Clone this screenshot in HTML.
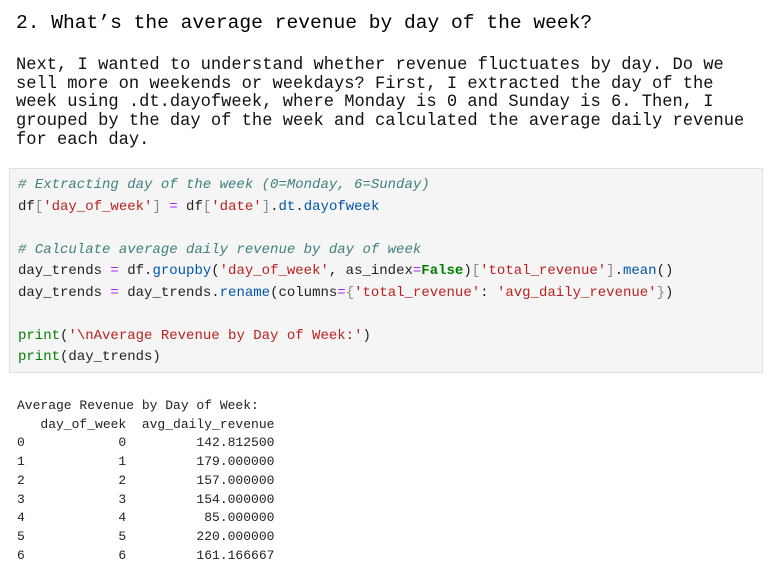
<!DOCTYPE html>
<html><head><style>
body{margin:0;background:#fff;width:772px;height:569px;overflow:hidden;font-family:"Liberation Mono",monospace;color:#000}
.h{position:absolute;left:16px;top:10px;font-size:19.6px;line-height:26px;white-space:pre}
.p{position:absolute;left:16px;top:57px;font-size:17.1px;line-height:18.7px;white-space:pre;color:#111}
.code{position:absolute;left:9px;top:168px;width:752px;height:203px;background:#f5f5f5;border:1px solid #e0e0e0}
.code pre{margin:0;position:absolute;left:8px;top:6px;font-family:"Liberation Mono",monospace;font-size:14px;line-height:21.5px;color:#222}
.c{color:#408080;font-style:italic}.s{color:#ba2121}.o{color:#aa22ff}.m{color:#0055aa}.g{color:#008000}.b{color:#888}.k{color:#008000;font-weight:bold}
.out{position:absolute;left:17px;top:397px;margin:0;font-family:"Liberation Mono",monospace;font-size:13px;line-height:18.7px;color:#222}
</style></head><body>
<div class="h">2. What’s the average revenue by day of the week?</div>
<div class="p">Next, I wanted to understand whether revenue fluctuates by day. Do we
sell more on weekends or weekdays? First, I extracted the day of the
week using .dt.dayofweek, where Monday is 0 and Sunday is 6. Then, I
grouped by the day of the week and calculated the average daily revenue
for each day.</div>
<div class="code"><pre><span class="c"># Extracting day of the week (0=Monday, 6=Sunday)</span>
df<span class="b">[</span><span class="s">'day_of_week'</span><span class="b">]</span> <span class="o">=</span> df<span class="b">[</span><span class="s">'date'</span><span class="b">]</span>.<span class="m">dt</span>.<span class="m">dayofweek</span>

<span class="c"># Calculate average daily revenue by day of week</span>
day_trends <span class="o">=</span> df.<span class="m">groupby</span>(<span class="s">'day_of_week'</span>, as_index<span class="o">=</span><span class="k">False</span>)<span class="b">[</span><span class="s">'total_revenue'</span><span class="b">]</span>.<span class="m">mean</span>()
day_trends <span class="o">=</span> day_trends.<span class="m">rename</span>(columns<span class="o">=</span><span class="b">{</span><span class="s">'total_revenue'</span>: <span class="s">'avg_daily_revenue'</span><span class="b">}</span>)

<span class="g">print</span>(<span class="s">'\nAverage Revenue by Day of Week:'</span>)
<span class="g">print</span>(day_trends)</pre></div>
<pre class="out">Average Revenue by Day of Week:
   day_of_week  avg_daily_revenue
0            0         142.812500
1            1         179.000000
2            2         157.000000
3            3         154.000000
4            4          85.000000
5            5         220.000000
6            6         161.166667</pre>
</body></html>
